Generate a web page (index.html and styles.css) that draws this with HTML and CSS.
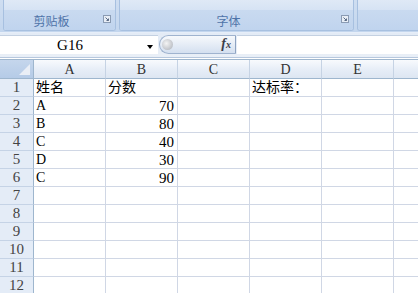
FILE: index.html
```html
<!DOCTYPE html>
<html>
<head>
<meta charset="utf-8">
<link rel="stylesheet" href="styles.css">
</head>
<body>
<div class="ribbon">
  <div class="group g1">
    <div class="group-top"></div>
    <div class="group-label"><span class="lbl">剪贴板</span>
      <svg class="launcher" width="8" height="8" viewBox="0 0 8 8"><rect x="0.5" y="0.5" width="7" height="7" fill="#e8eef6" stroke="#8a9bb3"/><path d="M2.5 2.5 L5.5 5.5 M5.5 3.5 V5.5 H3.5" stroke="#5a6b85" fill="none"/></svg>
    </div>
  </div>
  <div class="group g2">
    <div class="group-top"></div>
    <div class="group-label"><span class="lbl">字体</span>
      <svg class="launcher" width="8" height="8" viewBox="0 0 8 8"><rect x="0.5" y="0.5" width="7" height="7" fill="#e8eef6" stroke="#8a9bb3"/><path d="M2.5 2.5 L5.5 5.5 M5.5 3.5 V5.5 H3.5" stroke="#5a6b85" fill="none"/></svg>
    </div>
  </div>
  <div class="group g3">
    <div class="group-top"></div>
    <div class="group-label"></div>
  </div>
</div>
<div class="fbar">
  <div class="namebox"><span class="nb-text">G16</span><span class="nb-arrow"></span></div>
  <div class="fxpill"><span class="knob"></span><span class="fx"><i>f</i><small>x</small></span></div>
  <div class="finput"></div>
</div>
<div class="sheet">
  <div class="corner"><span class="tri"></span></div>
  <div class="ch">A</div><div class="ch">B</div><div class="ch">C</div><div class="ch">D</div><div class="ch">E</div><div class="ch last"></div>

  <div class="rh">1</div><div class="c">姓名</div><div class="c">分数</div><div class="c"></div><div class="c">达标率：</div><div class="c"></div><div class="c last"></div>
  <div class="rh">2</div><div class="c">A</div><div class="c n">70</div><div class="c"></div><div class="c"></div><div class="c"></div><div class="c last"></div>
  <div class="rh">3</div><div class="c">B</div><div class="c n">80</div><div class="c"></div><div class="c"></div><div class="c"></div><div class="c last"></div>
  <div class="rh">4</div><div class="c">C</div><div class="c n">40</div><div class="c"></div><div class="c"></div><div class="c"></div><div class="c last"></div>
  <div class="rh">5</div><div class="c">D</div><div class="c n">30</div><div class="c"></div><div class="c"></div><div class="c"></div><div class="c last"></div>
  <div class="rh">6</div><div class="c">C</div><div class="c n">90</div><div class="c"></div><div class="c"></div><div class="c"></div><div class="c last"></div>
  <div class="rh">7</div><div class="c"></div><div class="c"></div><div class="c"></div><div class="c"></div><div class="c"></div><div class="c last"></div>
  <div class="rh">8</div><div class="c"></div><div class="c"></div><div class="c"></div><div class="c"></div><div class="c"></div><div class="c last"></div>
  <div class="rh">9</div><div class="c"></div><div class="c"></div><div class="c"></div><div class="c"></div><div class="c"></div><div class="c last"></div>
  <div class="rh">10</div><div class="c"></div><div class="c"></div><div class="c"></div><div class="c"></div><div class="c"></div><div class="c last"></div>
  <div class="rh">11</div><div class="c"></div><div class="c"></div><div class="c"></div><div class="c"></div><div class="c"></div><div class="c last"></div>
  <div class="rh">12</div><div class="c"></div><div class="c"></div><div class="c"></div><div class="c"></div><div class="c"></div><div class="c last"></div>
</div>
</body>
</html>
```
FILE: styles.css
```css
html, body {
  margin: 0;
  padding: 0;
  width: 418px;
  height: 293px;
  overflow: hidden;
  background: #ffffff;
}
body {
  font-family: "Liberation Serif", "Noto Sans CJK SC", serif;
}
.ribbon {
  height: 33px;
  display: flex;
  gap: 3px;
  padding: 0 0 0 3px;
  background: linear-gradient(#cfdef1, #c3d6ee);
  box-sizing: border-box;
  border-bottom: 1px solid #e6eef9;
}
.group {
  display: flex;
  flex-direction: column;
  height: 31px;
  border: 1px solid #a7c0e0;
  border-top: none;
  border-radius: 0 0 3px 3px;
  background: #dbe7f6;
  box-sizing: border-box;
  overflow: hidden;
}
.g1 { width: 113px; }
.g2 { width: 235px; }
.g3 { flex: 1; border-right: none; border-radius: 0 0 0 3px; }
.group-top {
  height: 10px;
  background: linear-gradient(#dfe9f6, #d6e3f4);
}
.group-label {
  flex: 1;
  position: relative;
  background: linear-gradient(#c9daf0, #c0d4ee);
  display: flex;
  align-items: center;
  padding-right: 16px;
}
.lbl {
  flex: 1;
  text-align: center;
  font-family: "Noto Sans CJK SC", sans-serif;
  font-size: 12px;
  line-height: 14px;
  color: #4e73a8;
  padding-top: 1px;
}
.launcher {
  position: absolute;
  right: 4px;
  top: 5px;
}
.fbar {
  height: 25px;
  display: flex;
  align-items: stretch;
  padding: 2px 0 3px 0;
  box-sizing: border-box;
  background: linear-gradient(#e3ebf6, #e9eff7);
  border-bottom: 1px solid #b7c8de;
}
.namebox {
  width: 158px;
  background: #ffffff;
  border-top: 1px solid #c4d1e2;
  box-sizing: border-box;
  display: flex;
  align-items: center;
  position: relative;
}
.nb-text {
  width: 140px;
  text-align: center;
  font-size: 15px;
  color: #000;
}
.nb-arrow {
  position: absolute;
  left: 147px;
  top: 9px;
  width: 0;
  height: 0;
  border-left: 3px solid transparent;
  border-right: 3px solid transparent;
  border-top: 4px solid #000;
}
.fxpill {
  width: 77px;
  margin-left: 1px;
  border: 1px solid #9fb3cf;
  border-right: 1px solid #8ea3c1;
  border-radius: 10px 0 0 10px;
  background: linear-gradient(#f7f9fc, #d4e0f0);
  box-sizing: border-box;
  display: flex;
  align-items: center;
  justify-content: space-between;
  padding: 0 4px 0 2px;
}
.knob {
  width: 11px;
  height: 11px;
  border-radius: 50%;
  background: radial-gradient(circle at 40% 40%, #f4f4f4, #a9aeb6);
}
.fx {
  font-family: "Liberation Serif", serif;
  font-style: italic;
  font-weight: bold;
  color: #3b3f4a;
  font-size: 14px;
  line-height: 14px;
}
.fx i { font-style: italic; }
.fx small { font-size: 10px; }
.finput {
  flex: 1;
  margin-left: 1px;
  background: #ffffff;
  border-top: 1px solid #c4d1e2;
}
.sheet {
  display: grid;
  grid-template-columns: 34px 72px 72px 72px 72px 72px 1fr;
  grid-template-rows: 19px repeat(12, 18px);
  border-top: 1px solid #9eb6ce;
  margin-top: 1px;
}
.corner {
  background: linear-gradient(#c5d6ec, #b5cbe7);
  border-right: 1px solid #9eb6ce;
  border-bottom: 1px solid #9eb6ce;
  box-sizing: border-box;
  position: relative;
}
.tri {
  position: absolute;
  right: 3px;
  bottom: 3px;
  width: 0;
  height: 0;
  border-left: 11px solid transparent;
  border-bottom: 11px solid #e9eef6;
}
.ch {
  background: linear-gradient(#f8fafd, #e6edf7 55%, #dde6f2);
  border-right: 1px solid #c6d3e4;
  border-bottom: 1px solid #9eb6ce;
  box-sizing: border-box;
  text-align: center;
  font-size: 14px;
  line-height: 19px;
  color: #333;
}
.rh {
  background: #e4ecf7;
  border-right: 1px solid #9eb6ce;
  border-bottom: 1px solid #c5d3e6;
  box-sizing: border-box;
  text-align: center;
  font-size: 15px;
  line-height: 17px;
  color: #444;
}
.c {
  border-right: 1px solid #d0d7e5;
  border-bottom: 1px solid #d0d7e5;
  box-sizing: border-box;
  font-size: 14px;
  line-height: 18px;
  padding: 0 3px 0 2px;
  color: #000;
  white-space: nowrap;
}
.c.n { text-align: right; font-size: 15px; }
.last { border-right: none; }
```
